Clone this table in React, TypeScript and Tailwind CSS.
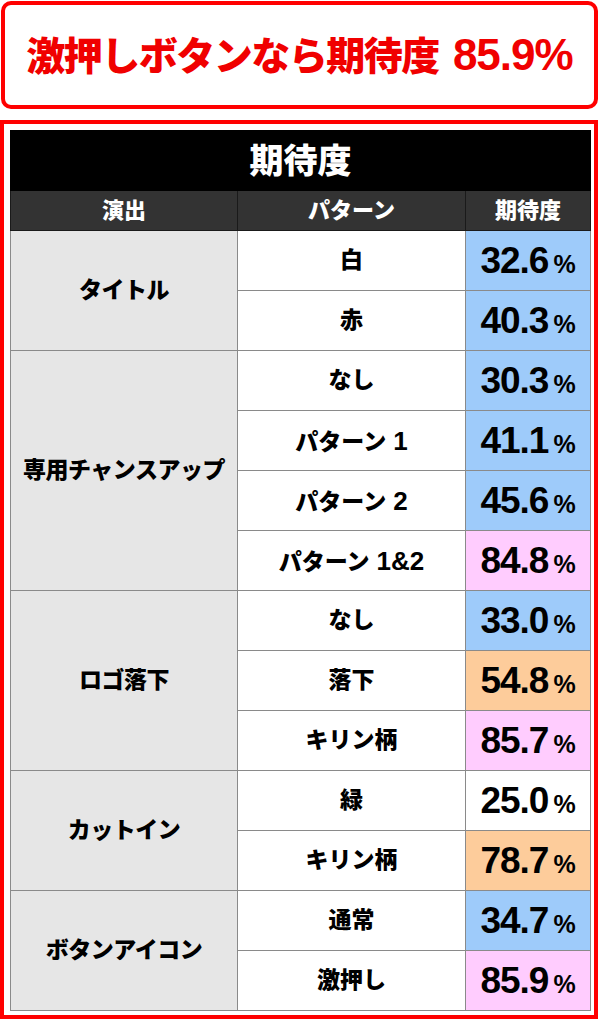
import React from "react";

type Row = { label: string; num?: string; value: string; color: string };
type Group = { name: string; rows: Row[] };

const BLUE = "bg-[#9ecbfa]";
const PINK = "bg-[#ffccfe]";
const ORANGE = "bg-[#fdcc9b]";
const WHITE = "bg-white";

const groups: Group[] = [
  { name: "タイトル", rows: [
    { label: "白", value: "32.6", color: BLUE },
    { label: "赤", value: "40.3", color: BLUE },
  ] },
  { name: "専用チャンスアップ", rows: [
    { label: "なし", value: "30.3", color: BLUE },
    { label: "パターン", num: "1", value: "41.1", color: BLUE },
    { label: "パターン", num: "2", value: "45.6", color: BLUE },
    { label: "パターン", num: "1&2", value: "84.8", color: PINK },
  ] },
  { name: "ロゴ落下", rows: [
    { label: "なし", value: "33.0", color: BLUE },
    { label: "落下", value: "54.8", color: ORANGE },
    { label: "キリン柄", value: "85.7", color: PINK },
  ] },
  { name: "カットイン", rows: [
    { label: "緑", value: "25.0", color: WHITE },
    { label: "キリン柄", value: "78.7", color: ORANGE },
  ] },
  { name: "ボタンアイコン", rows: [
    { label: "通常", value: "34.7", color: BLUE },
    { label: "激押し", value: "85.9", color: PINK },
  ] },
];

const jp = { fontFamily: '"Liberation Sans", "Noto Sans CJK JP", sans-serif' };

export default function App() {
  return (
    <div className="w-[600px] h-[1020px] bg-white overflow-hidden" style={jp}>
      <div className="pt-[1px] pl-[1px] pr-[2px]">
        <div className="h-[108px] border-[4px] border-[#ff0000] rounded-[10px] flex items-center justify-center">
          <span className="font-black text-[#f00000] leading-none whitespace-nowrap">
            <span className="text-[39px] tracking-[-1.5px]">激押しボタンなら期待度</span>
            <span className="text-[44px] font-bold tracking-[-1px] ml-[14px]">85.9%</span>
          </span>
        </div>
      </div>
      <div className="mt-[11px] w-[598px] h-[899px] border-[4px] border-[#ff0000] pt-[6px] pl-[6px] pr-[4px] pb-[5px]">
        <table className="w-[580px] table-fixed border-collapse">
          <colgroup>
            <col className="w-[227px]" />
            <col className="w-[228px]" />
            <col className="w-[125px]" />
          </colgroup>
          <thead>
            <tr className="h-[60px]">
              <th colSpan={3} className="bg-black text-white text-[34px] font-black border border-black leading-none">
                期待度
              </th>
            </tr>
            <tr className="h-[40px]">
              <th className="bg-[#333333] text-white text-[22px] font-black border border-[#1a1a1a] leading-none">演出</th>
              <th className="bg-[#333333] text-white text-[22px] font-black border border-[#1a1a1a] leading-none">パターン</th>
              <th className="bg-[#333333] text-white text-[22px] font-black border border-[#1a1a1a] leading-none">期待度</th>
            </tr>
          </thead>
          <tbody>
            {groups.map((g) =>
              g.rows.map((r, i) => (
                <tr key={g.name + i} className="h-[60px]">
                  {i === 0 && (
                    <td
                      rowSpan={g.rows.length}
                      className="bg-[#e6e6e6] text-black text-[23px] font-black text-center border border-[#8a8a8a] p-0 leading-none tracking-[-0.5px]"
                    >
                      {g.name}
                    </td>
                  )}
                  <td className="bg-white text-black text-[23px] font-black text-center border border-[#8a8a8a] p-0 leading-none">
                    {r.label}
                    {r.num && <span className="text-[26px] font-bold ml-[7px]">{r.num}</span>}
                  </td>
                  <td className={`${r.color} text-black text-center border border-[#8a8a8a] p-0 leading-none`}>
                    <span className="text-[37px] font-bold tracking-[-1px]">{r.value}</span>
                    <span className="text-[25px] font-bold ml-[5px]">%</span>
                  </td>
                </tr>
              ))
            )}
          </tbody>
        </table>
      </div>
    </div>
  );
}
